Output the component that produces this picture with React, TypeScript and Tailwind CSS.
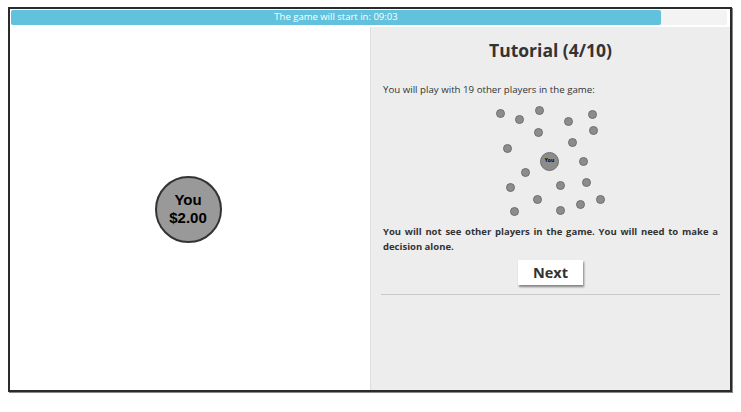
import React from "react";

const dots: [number, number][] = [
  [500, 113],
  [519, 119],
  [539, 110],
  [568, 121],
  [592, 114],
  [538, 132],
  [593, 130],
  [572, 142],
  [507, 148],
  [583, 161],
  [525, 172],
  [510, 187],
  [560, 185],
  [586, 182],
  [537, 199],
  [600, 199],
  [580, 204],
  [514, 211],
  [560, 210],
];

// map origin of the dot field (page coords)
const FIELD_X = 490;
const FIELD_Y = 101;

function PlayerMap() {
  return (
    <div className="relative mx-auto mt-[5px] h-[120px] w-[120px]">
      {dots.map(([x, y], i) => (
        <span
          key={i}
          className="absolute h-[9px] w-[9px] rounded-full border border-[#6f6f6f] bg-[#8c8c8c]"
          style={{ left: x - FIELD_X - 4.5, top: y - FIELD_Y - 4.5 }}
        />
      ))}
      <span
        className="absolute flex h-[19px] w-[19px] items-center justify-center rounded-full border border-[#6f6f6f] bg-[#8c8c8c] text-[5px] font-bold text-black"
        style={{ left: 549 - FIELD_X - 9.5, top: 161 - FIELD_Y - 9.5 }}
      >
        You
      </span>
    </div>
  );
}

export default function App() {
  return (
    <div className="h-[412px] w-[741px] bg-white pl-[8px] pt-[7px]">
      <div className="flex h-[385px] w-[724px] flex-col border-2 border-[#2b2b2b] shadow-[1px_1px_0_#888] font-['Open_Sans',sans-serif]">
        {/* Countdown bar */}
        <div className="ml-px mr-[3px] mt-px flex h-[15px] rounded-[2px] bg-[#f3f3f3]">
          <div className="flex w-[650px] items-center justify-center rounded-[2px] bg-[#62c1dc] text-[9.5px] text-white">
            The game will start in: 09:03
          </div>
        </div>

        <div className="mt-[2px] flex flex-1">
          {/* Left: own player */}
          <div className="flex w-[360px] items-center justify-center bg-white pr-[4px] pt-[1px]">
            <div className="flex h-[67px] w-[67px] flex-col items-center justify-center rounded-full border-2 border-[#333] bg-[#999] font-['Liberation_Sans',Arial,sans-serif] text-[15px] font-bold leading-[18px] text-black">
              <span>You</span>
              <span>$2.00</span>
            </div>
          </div>

          {/* Right: tutorial */}
          <div className="flex flex-1 flex-col border-l border-[#dedede] bg-[#ededed] px-[12px]">
            <h1 className="mt-[10px] text-center text-[17.5px] font-bold leading-[26px] text-[#333]">
              Tutorial (4/10)
            </h1>
            <p className="mt-[21px] text-[9.7px] leading-[12px] text-[#333]">
              You will play with 19 other players in the game:
            </p>
            <PlayerMap />
            <p className="mt-[3px] text-justify text-[9.5px] font-bold leading-[15px] text-[#333]">
              You will not see other players in the game. You will need to make a decision alone.
            </p>
            <div className="mt-[6px] flex justify-center">
              <button className="h-[25px] w-[65px] bg-white text-[14.5px] font-bold text-[#333] shadow-[1px_2px_2px_rgba(0,0,0,0.45)]">
                Next
              </button>
            </div>
            <div className="mx-[-2px] mt-[9px] border-t border-[#c9c9c9]" />
          </div>
        </div>
      </div>
    </div>
  );
}
